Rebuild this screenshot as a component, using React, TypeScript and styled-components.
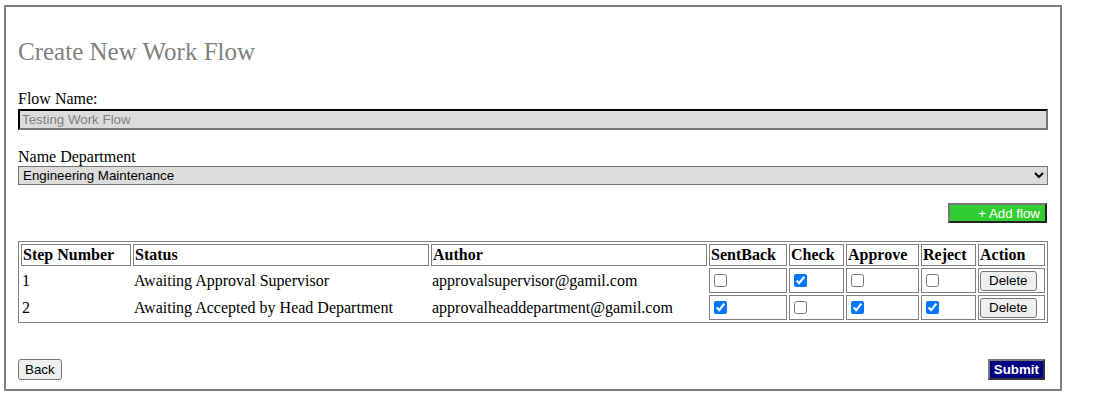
import React from 'react'
import styled, { createGlobalStyle } from 'styled-components'

const GlobalStyle = createGlobalStyle`
  body {
    margin: 0;
    background: #fff;
    font-family: "Liberation Serif", "Times New Roman", serif;
    font-size: 16px;
    color: #000;
  }
`

const Panel = styled.div`
  box-sizing: border-box;
  width: 1058px;
  height: 386px;
  margin: 5px 0 0 4px;
  padding: 0 12px;
  border: 2px solid #808080;
`

const Title = styled.h2`
  margin: 0;
  padding-top: 29px;
  font-size: 25px;
  line-height: 31px;
  font-weight: normal;
  color: #808080;
`

const FieldLabel = styled.label<{ $gap: number }>`
  display: block;
  margin-top: ${({ $gap }) => $gap}px;
  line-height: 18px;
`

const TextInput = styled.input`
  display: block;
  box-sizing: border-box;
  width: 100%;
  height: 21px;
  margin: 1px 0 0;
  padding: 1px 2px;
  background: #dcdcdc;
  border: 2px inset #767676;
  border-top-color: #222;
  border-left-color: #222;
  font-family: "Liberation Sans", Arial, sans-serif;
  font-size: 13.33px;
  color: #808080;
`

const Select = styled.select`
  display: block;
  box-sizing: border-box;
  width: 100%;
  height: 19px;
  margin: 0;
  padding: 0;
  background: #dcdcdc;
  border: 1px solid #767676;
  border-radius: 0;
  font-family: "Liberation Sans", Arial, sans-serif;
  font-size: 13.33px;
  color: #000;
`

const ToolRow = styled.div`
  display: flex;
  justify-content: flex-end;
  margin-top: 18px;
  padding-right: 1px;
`

const AddButton = styled.button`
  box-sizing: border-box;
  width: 99px;
  height: 20px;
  padding: 0 5px 0 0;
  text-align: right;
  background: limegreen;
  color: #fff;
  border: 2px solid;
  border-color: #777 #222 #222 #777;
  font-family: "Liberation Sans", Arial, sans-serif;
  font-size: 13.33px;
`

const FlowTable = styled.table`
  width: 100%;
  margin-top: 18px;
  table-layout: fixed;
  border-collapse: separate;
  border-spacing: 2px;
  border: 1px solid #808080;
`

const HeadCell = styled.th<{ $w?: number }>`
  box-sizing: border-box;
  width: ${({ $w }) => ($w ? `${$w}px` : 'auto')};
  height: 22px;
  padding: 1px;
  border: 1px solid #808080;
  text-align: left;
  font-weight: bold;
  white-space: nowrap;
`

const Cell = styled.td<{ $boxed?: boolean }>`
  height: 21px;
  padding: 1px 1px 1px 0;
  border: 1px solid ${({ $boxed }) => ($boxed ? '#808080' : 'transparent')};
  vertical-align: middle;
  white-space: nowrap;
`

const Check = styled.input`
  width: 13px;
  height: 13px;
  margin: 3px 3px 3px 4px;
  vertical-align: middle;
`

const PlainButton = styled.button`
  height: 21px;
  padding: 1px 6px;
  background: #efefef;
  border: 1px solid #767676;
  border-radius: 3px;
  font-family: "Liberation Sans", Arial, sans-serif;
  font-size: 13.33px;
  color: #000;
`

const SmallButton = styled(PlainButton)`
  height: 20px;
  margin-left: 1px;
  padding: 1px 8px;
`

const Footer = styled.div`
  display: flex;
  justify-content: space-between;
  align-items: flex-start;
  margin-top: 36px;
  padding-right: 3px;
`

const SubmitButton = styled.button`
  box-sizing: border-box;
  height: 21px;
  padding: 0 4px;
  background: navy;
  color: #fff;
  border: 2px solid;
  border-color: #777 #333 #333 #777;
  font-family: "Liberation Sans", Arial, sans-serif;
  font-size: 13.33px;
  font-weight: bold;
`

type Step = {
  no: number
  status: string
  author: string
  sentBack: boolean
  check: boolean
  approve: boolean
  reject: boolean
}

const steps: Step[] = [
  {
    no: 1,
    status: 'Awaiting Approval Supervisor',
    author: 'approvalsupervisor@gamil.com',
    sentBack: false,
    check: true,
    approve: false,
    reject: false,
  },
  {
    no: 2,
    status: 'Awaiting Accepted by Head Department',
    author: 'approvalheaddepartment@gamil.com',
    sentBack: true,
    check: false,
    approve: true,
    reject: true,
  },
]

export default function App() {
  return (
    <>
      <GlobalStyle />
      <Panel>
        <Title>Create New Work Flow</Title>

        <FieldLabel $gap={23}>Flow Name:</FieldLabel>
        <TextInput value="Testing Work Flow" readOnly />

        <FieldLabel $gap={18}>Name Department</FieldLabel>
        <Select defaultValue="eng">
          <option value="eng">Engineering Maintenance</option>
        </Select>

        <ToolRow>
          <AddButton>+ Add flow</AddButton>
        </ToolRow>

        <FlowTable>
          <thead>
            <tr>
              <HeadCell $w={110}>Step Number</HeadCell>
              <HeadCell $w={296}>Status</HeadCell>
              <HeadCell $w={276}>Author</HeadCell>
              <HeadCell $w={78}>SentBack</HeadCell>
              <HeadCell $w={55}>Check</HeadCell>
              <HeadCell $w={73}>Approve</HeadCell>
              <HeadCell $w={55}>Reject</HeadCell>
              <HeadCell>Action</HeadCell>
            </tr>
          </thead>
          <tbody>
            {steps.map((s) => (
              <tr key={s.no}>
                <Cell>{s.no}</Cell>
                <Cell>{s.status}</Cell>
                <Cell>{s.author}</Cell>
                <Cell $boxed>
                  <Check type="checkbox" defaultChecked={s.sentBack} />
                </Cell>
                <Cell $boxed>
                  <Check type="checkbox" defaultChecked={s.check} />
                </Cell>
                <Cell $boxed>
                  <Check type="checkbox" defaultChecked={s.approve} />
                </Cell>
                <Cell $boxed>
                  <Check type="checkbox" defaultChecked={s.reject} />
                </Cell>
                <Cell $boxed>
                  <SmallButton>Delete</SmallButton>
                </Cell>
              </tr>
            ))}
          </tbody>
        </FlowTable>

        <Footer>
          <PlainButton>Back</PlainButton>
          <SubmitButton>Submit</SubmitButton>
        </Footer>
      </Panel>
    </>
  )
}
